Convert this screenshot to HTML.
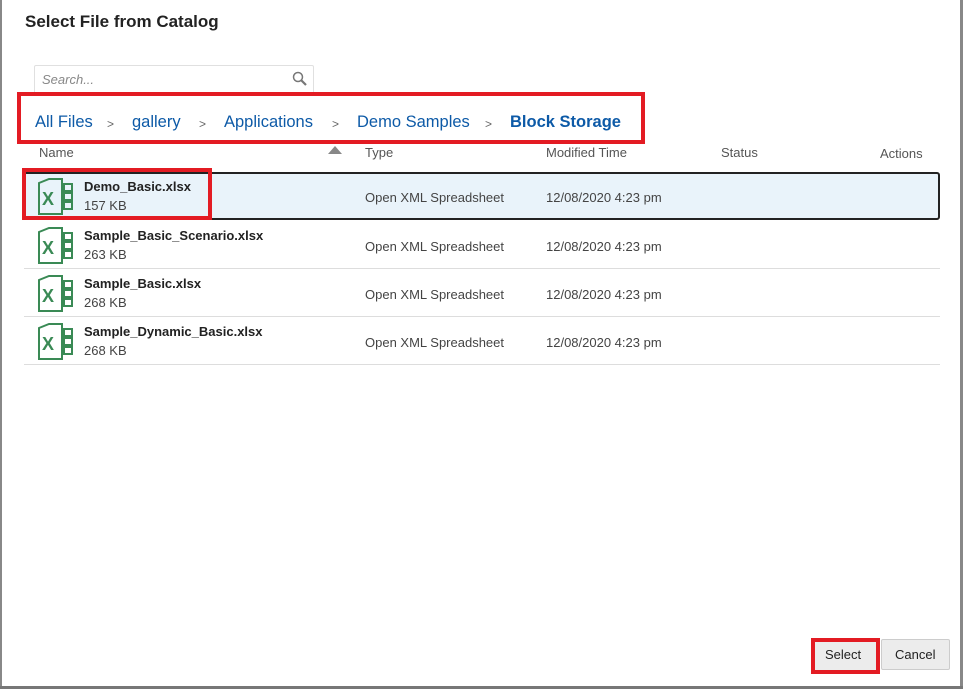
<!DOCTYPE html>
<html><head><style>
body{margin:0;width:963px;height:689px;background:#fff;position:relative;overflow:hidden;font-family:"Liberation Sans",sans-serif;color:#333}
.a{position:absolute}
.t{font-size:13px;color:#555}
.bc{font-size:16.5px;color:#0d5aa7;top:113px}
.sep{font-size:12px;color:#666;top:117px}
.row{position:absolute;left:24px;width:916px;height:47px;border-bottom:1px solid #ddd}
.nm{position:absolute;left:60px;top:7px;font-size:13px;font-weight:bold;color:#222}
.sz{position:absolute;left:60px;top:26px;font-size:13px;color:#444}
.ty{position:absolute;left:341px;top:18px;font-size:13px;color:#444}
.mt{position:absolute;left:522px;top:18px;font-size:13px;color:#444}
.ic{position:absolute;left:13px;top:6px}
</style></head><body>
<div class="a" style="left:0;top:0;width:2px;height:689px;background:#888"></div>
<div class="a" style="right:0;top:0;width:3px;height:689px;background:#888"></div>
<div class="a" style="left:0;bottom:0;width:963px;height:3px;background:#777"></div>
<div class="a" style="left:25px;top:12px;font-size:17px;font-weight:bold;color:#222">Select File from Catalog</div>
<div class="a" style="left:34px;top:65px;width:278px;height:27px;border:1px solid #e0e0e0;border-radius:2px"></div>
<div class="a" style="left:42px;top:72px;font-size:13px;font-style:italic;color:#888">Search...</div>
<svg class="a" style="left:292px;top:71px" width="16" height="16"><circle cx="6" cy="6" r="4.5" fill="none" stroke="#777" stroke-width="1.5"/><path d="M9.5 9.5L14 14" stroke="#777" stroke-width="2.2"/></svg>
<div class="a" style="left:17px;top:92px;width:620px;height:44px;border:4px solid #e31b23"></div>
<div class="a bc" style="left:35px">All Files</div>
<div class="a sep" style="left:107px">&gt;</div>
<div class="a bc" style="left:132px">gallery</div>
<div class="a sep" style="left:199px">&gt;</div>
<div class="a bc" style="left:224px">Applications</div>
<div class="a sep" style="left:332px">&gt;</div>
<div class="a bc" style="left:357px">Demo Samples</div>
<div class="a sep" style="left:485px">&gt;</div>
<div class="a bc" style="left:510px;font-weight:bold">Block Storage</div>
<div class="a t" style="left:39px;top:145px">Name</div>
<svg class="a" style="left:328px;top:146px" width="14" height="9"><path d="M0 8L7 0L14 8Z" fill="#888"/></svg>
<div class="a t" style="left:365px;top:145px">Type</div>
<div class="a t" style="left:546px;top:145px">Modified Time</div>
<div class="a t" style="left:721px;top:145px">Status</div>
<div class="a t" style="left:880px;top:146px">Actions</div>

<div class="row" style="top:172px;height:44px;background:#e9f3fa;border:2px solid #222;border-radius:3px;width:913px;left:23px"></div>
<div class="a" style="left:22px;top:168px;width:182px;height:44px;border:4px solid #e31b23"></div>

<div class="row" style="top:172px;border:none">
<svg class="ic" width="38" height="38"><path d="M2 5L12 1H25V36H2Z" fill="none" stroke="#3a8a55" stroke-width="2"/><text x="5" y="27" font-family="Liberation Sans" font-weight="bold" font-size="18" fill="#3a8a55">X</text><rect x="27" y="6" width="8" height="7" fill="none" stroke="#3a8a55" stroke-width="2"/><rect x="27" y="15" width="8" height="7" fill="none" stroke="#3a8a55" stroke-width="2"/><rect x="27" y="24" width="8" height="7" fill="none" stroke="#3a8a55" stroke-width="2"/></svg>
<div class="nm">Demo_Basic.xlsx</div><div class="sz">157 KB</div><div class="ty">Open XML Spreadsheet</div><div class="mt">12/08/2020 4:23 pm</div></div>

<div class="row" style="top:221px">
<svg class="ic" width="38" height="38"><path d="M2 5L12 1H25V36H2Z" fill="none" stroke="#3a8a55" stroke-width="2"/><text x="5" y="27" font-family="Liberation Sans" font-weight="bold" font-size="18" fill="#3a8a55">X</text><rect x="27" y="6" width="8" height="7" fill="none" stroke="#3a8a55" stroke-width="2"/><rect x="27" y="15" width="8" height="7" fill="none" stroke="#3a8a55" stroke-width="2"/><rect x="27" y="24" width="8" height="7" fill="none" stroke="#3a8a55" stroke-width="2"/></svg>
<div class="nm">Sample_Basic_Scenario.xlsx</div><div class="sz">263 KB</div><div class="ty">Open XML Spreadsheet</div><div class="mt">12/08/2020 4:23 pm</div></div>

<div class="row" style="top:269px">
<svg class="ic" width="38" height="38"><path d="M2 5L12 1H25V36H2Z" fill="none" stroke="#3a8a55" stroke-width="2"/><text x="5" y="27" font-family="Liberation Sans" font-weight="bold" font-size="18" fill="#3a8a55">X</text><rect x="27" y="6" width="8" height="7" fill="none" stroke="#3a8a55" stroke-width="2"/><rect x="27" y="15" width="8" height="7" fill="none" stroke="#3a8a55" stroke-width="2"/><rect x="27" y="24" width="8" height="7" fill="none" stroke="#3a8a55" stroke-width="2"/></svg>
<div class="nm">Sample_Basic.xlsx</div><div class="sz">268 KB</div><div class="ty">Open XML Spreadsheet</div><div class="mt">12/08/2020 4:23 pm</div></div>

<div class="row" style="top:317px">
<svg class="ic" width="38" height="38"><path d="M2 5L12 1H25V36H2Z" fill="none" stroke="#3a8a55" stroke-width="2"/><text x="5" y="27" font-family="Liberation Sans" font-weight="bold" font-size="18" fill="#3a8a55">X</text><rect x="27" y="6" width="8" height="7" fill="none" stroke="#3a8a55" stroke-width="2"/><rect x="27" y="15" width="8" height="7" fill="none" stroke="#3a8a55" stroke-width="2"/><rect x="27" y="24" width="8" height="7" fill="none" stroke="#3a8a55" stroke-width="2"/></svg>
<div class="nm">Sample_Dynamic_Basic.xlsx</div><div class="sz">268 KB</div><div class="ty">Open XML Spreadsheet</div><div class="mt">12/08/2020 4:23 pm</div></div>

<div class="a" style="left:811px;top:638px;width:61px;height:28px;border:4px solid #e31b23;background:#ececec"></div>
<div class="a" style="left:825px;top:647px;font-size:13px;color:#222">Select</div>
<div class="a" style="left:881px;top:639px;width:67px;height:29px;border:1px solid #ccc;border-radius:2px;background:#ececec"></div>
<div class="a" style="left:895px;top:647px;font-size:13px;color:#222">Cancel</div>
</body></html>
